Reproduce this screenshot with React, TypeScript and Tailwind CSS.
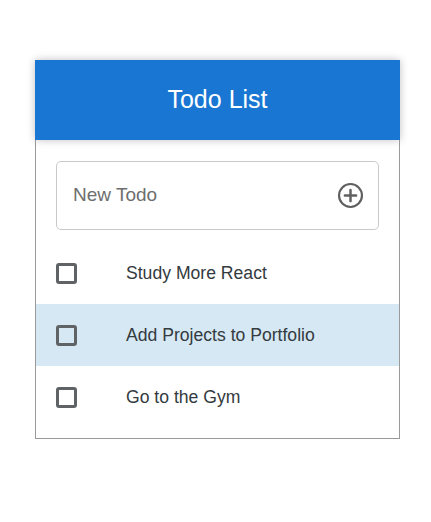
import React from "react";

const todos = [
  { text: "Study More React", active: false },
  { text: "Add Projects to Portfolio", active: true },
  { text: "Go to the Gym", active: false },
];

export default function App() {
  return (
    <div className="min-h-screen bg-white pt-[60px]" style={{ fontFamily: '"Liberation Sans", Arial, sans-serif' }}>
      <div className="ml-[35px] w-[365px]">
        <div className="flex h-[80px] items-center justify-center bg-[#1976d2] text-[25px] text-white shadow-[0_0_8px_rgba(0,0,0,0.25)]">
          Todo List
        </div>
        <div className="border border-t-0 border-[#9a9a9a] pt-[21px] pb-[10px]">
          <div className="mx-[20px] flex h-[69px] items-center justify-between rounded-[5px] border border-[#c9c9c9] pl-[16px] pr-[14px]">
            <span className="text-[19px] text-[#6e6e6e]">New Todo</span>
            <svg width="27" height="27" viewBox="0 0 24 24" fill="none" stroke="#606060" strokeWidth="1.9" strokeLinecap="round">
              <circle cx="12" cy="12" r="10.2" />
              <path d="M12 7v10M7 12h10" strokeWidth="2.2" />
            </svg>
          </div>
          <ul className="mt-[12px]">
            {todos.map((t) => (
              <li
                key={t.text}
                className={`flex h-[62px] items-center ${t.active ? "bg-[#d6e8f3]" : "bg-white"}`}
              >
                <div className="ml-[20px] h-[21px] w-[21px] rounded-[3px] border-[3px] border-[#5f6366]" />
                <span className="ml-[49px] text-[17.6px] text-[#333a40]">{t.text}</span>
              </li>
            ))}
          </ul>
        </div>
      </div>
    </div>
  );
}
